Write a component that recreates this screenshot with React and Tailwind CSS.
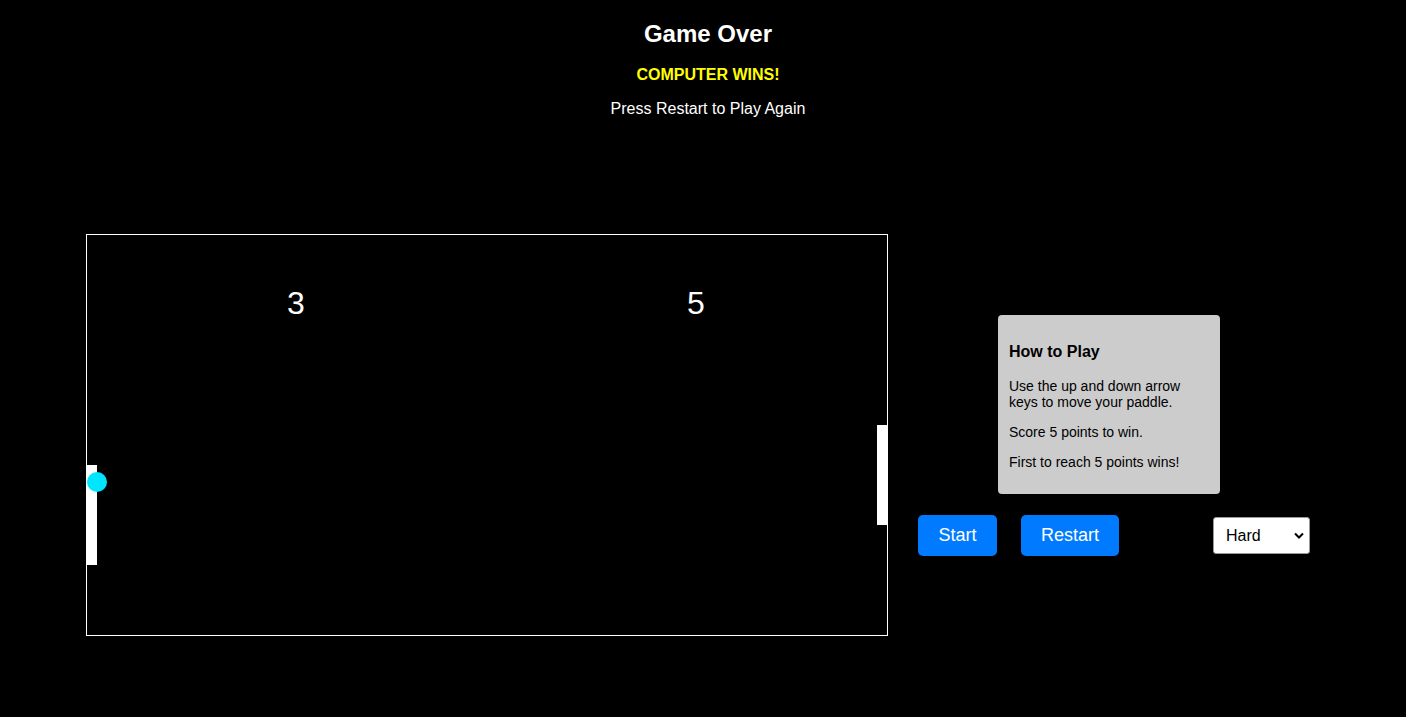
import React from "react";

export default function App() {
  return (
    <div
      className="min-h-screen w-full bg-black text-white"
      style={{ fontFamily: '"Liberation Sans", Arial, sans-serif' }}
    >
      <div className="pl-[10px] pt-[20px] text-center">
        <h1 className="text-[24px] font-bold leading-[28px]">Game Over</h1>
        <p className="mt-[18px] text-[16px] font-bold leading-[18px] text-[#ffff00]">
          COMPUTER WINS!
        </p>
        <p className="mt-[16px] text-[16px] leading-[18px]">Press Restart to Play Again</p>
      </div>

      <div className="mt-[116px] flex items-start pl-[86px]">
        <div className="h-[402px] w-[802px] shrink-0 border border-white">
          <svg width="800" height="400" viewBox="0 0 800 400" className="block">
            <rect x="0" y="230" width="10" height="100" fill="#ffffff" />
            <rect x="790" y="190" width="10" height="100" fill="#ffffff" />
            <circle cx="10" cy="247" r="10" fill="#00e6ff" />
            <text
              x="200"
              y="79"
              fill="#ffffff"
              fontSize="32"
              fontFamily='"Liberation Sans", Arial, sans-serif'
            >
              3
            </text>
            <text
              x="600"
              y="79"
              fill="#ffffff"
              fontSize="32"
              fontFamily='"Liberation Sans", Arial, sans-serif'
            >
              5
            </text>
          </svg>
        </div>

        <div className="ml-[30px] flex flex-col">
          <div className="ml-[80px] mt-[81px] w-[222px] rounded-[4px] bg-[#cccccc] px-[11px] pb-[24px] pt-[11px] text-black">
            <h3 className="mt-[17px] text-[16px] font-bold leading-[18px]">How to Play</h3>
            <p className="mt-[17px] text-[14px] leading-[16px]">
              Use the up and down arrow keys to move your paddle.
            </p>
            <p className="mt-[14px] text-[14px] leading-[16px]">Score 5 points to win.</p>
            <p className="mt-[14px] text-[14px] leading-[16px]">First to reach 5 points wins!</p>
          </div>

          <div className="mt-[21px] flex items-start">
            <button className="flex h-[41px] w-[79px] shrink-0 items-center justify-center rounded-[5px] bg-[#007bff] text-[18px] text-white">
              Start
            </button>
            <button className="ml-[24px] flex h-[41px] w-[98px] shrink-0 items-center justify-center rounded-[5px] bg-[#007bff] text-[18px] text-white">
              Restart
            </button>
            <div className="relative ml-[94px] mt-[2px] h-[37px] w-[97px] shrink-0 rounded-[3px] border border-[#999999] bg-white text-black">
              <select
                defaultValue="Hard"
                className="h-full w-full appearance-none rounded-[3px] bg-transparent pl-[12px] text-[16px] text-black outline-none"
                style={{ fontFamily: '"Liberation Sans", Arial, sans-serif' }}
              >
                <option>Easy</option>
                <option>Medium</option>
                <option>Hard</option>
              </select>
              <svg
                className="pointer-events-none absolute right-[5px] top-[14px]"
                width="10"
                height="7"
                viewBox="0 0 10 7"
              >
                <path d="M1 1.5 L5 5.5 L9 1.5" stroke="#000" strokeWidth="2" fill="none" />
              </svg>
            </div>
          </div>
        </div>
      </div>
    </div>
  );
}
